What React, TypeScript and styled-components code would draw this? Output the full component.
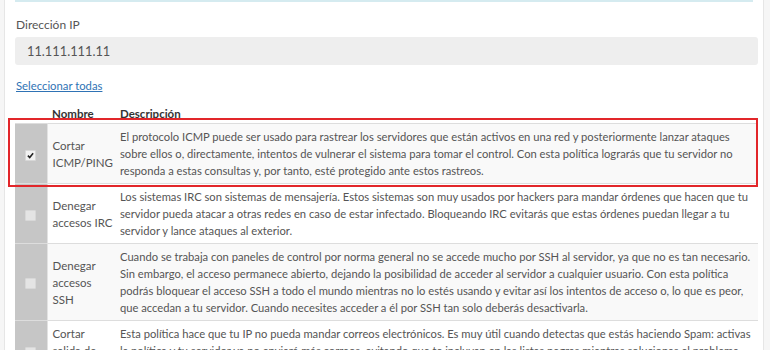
import { createGlobalStyle } from "styled-components";
import styled from "styled-components";

const GlobalStyle = createGlobalStyle`
    html, body {
        margin: 0;
        padding: 0;
        background: #f6f6f6;
    }
    body {
        font-family: Lato, "Open Sans", sans-serif;
        font-size: 11.5px;
        color: #555;
    }
`

const Page = styled.div`
    display: flex;
    height: 350px;
    overflow: hidden;
`

const Gutter = styled.div<{ $w: number }>`
    width: ${p => p.$w}px;
    flex-shrink: 0;
    background: #f6f6f6;
`

const Panel = styled.div`
    flex: 1;
    background: white;
    border-left: 1px solid #e6e6e6;
    border-right: 1px solid #e6e6e6;
    padding: 0 5px 0 10px;
`

const AlertEdge = styled.div`
    height: 0;
    border-bottom: 2px solid #d5ebf0;
    margin-right: 5px;
`

const Label = styled.div`
    margin-top: 14px;
    padding-left: 1px;
    line-height: 17px;
    font-size: 12px;
    color: #555;
`

const ReadonlyInput = styled.div`
    margin-top: 4px;
    height: 28px;
    line-height: 28px;
    background: #eeeeee;
    border-radius: 3px;
    padding: 0 12px;
    font-size: 12.8px;
    color: #555;
`

const SelectAll = styled.a`
    display: inline-block;
    margin-top: 12px;
    padding-left: 1px;
    line-height: 17px;
    font-size: 11.3px;
    color: #2f73b5;
    text-decoration: underline;
    cursor: pointer;
`

const TableWrap = styled.div`
    position: relative;
    margin-top: 8px;
`

const Table = styled.table`
    width: 100%;
    table-layout: fixed;
    border-collapse: collapse;
    line-height: 17px;
`

const Th = styled.th<{ $w?: number; $pl: number }>`
    box-sizing: border-box;
    text-align: left;
    font-weight: bold;
    font-size: 11.5px;
    color: #333;
    padding: 3px 0 1px ${p => p.$pl}px;
    width: ${p => (p.$w ? `${p.$w}px` : "auto")};
`

const Row = styled.tr<{ $striped: boolean }>`
    border-top: 1px solid #dddddd;
    background: ${p => (p.$striped ? "#f9f9f9" : "white")};
`

const CheckCell = styled.td`
    background: #c6c6c6;
    text-align: center;
    vertical-align: middle;
    padding: 0;
`

const NameCell = styled.td`
    padding: 4px 0 4px 5px;
    vertical-align: middle;
    color: #555;
    border-left: 1px solid #e2e2e2;
`

const NameLine = styled.span`
    display: block;
    white-space: nowrap;
`

const DescCell = styled.td`
    padding: 4px 0 4px 6px;
    vertical-align: top;
    color: #555;
    font-size: 11.2px;
`

const DescLine = styled.span`
    display: block;
    white-space: nowrap;
`

const Box = styled.span<{ $checked: boolean }>`
    display: inline-flex;
    align-items: center;
    justify-content: center;
    width: 9px;
    height: 9px;
    border-radius: 1px;
    background: ${p => (p.$checked ? "#f2f2f2" : "#e4e4e4")};
    border: 1px solid #d8d8d8;
    vertical-align: middle;
`

const Highlight = styled.div`
    position: absolute;
    left: -7px;
    right: 0;
    top: 16px;
    height: 65px;
    border: 2px solid #e2262a;
    pointer-events: none;
`

type Policy = { name: string[]; description: string[]; checked?: boolean }

const policies: Policy[] = [
    {
        name: ["Cortar", "ICMP/PING"],
        checked: true,
        description: [
            "El protocolo ICMP puede ser usado para rastrear los servidores que están activos en una red y posteriormente lanzar ataques",
            "sobre ellos o, directamente, intentos de vulnerar el sistema para tomar el control. Con esta política lograrás que tu servidor no",
            "responda a estas consultas y, por tanto, esté protegido ante estos rastreos.",
        ],
    },
    {
        name: ["Denegar", "accesos IRC"],
        description: [
            "Los sistemas IRC son sistemas de mensajería. Estos sistemas son muy usados por hackers para mandar órdenes que hacen que tu",
            "servidor pueda atacar a otras redes en caso de estar infectado. Bloqueando IRC evitarás que estas órdenes puedan llegar a tu",
            "servidor y lance ataques al exterior.",
        ],
    },
    {
        name: ["Denegar", "accesos", "SSH"],
        description: [
            "Cuando se trabaja con paneles de control por norma general no se accede mucho por SSH al servidor, ya que no es tan necesario.",
            "Sin embargo, el acceso permanece abierto, dejando la posibilidad de acceder al servidor a cualquier usuario. Con esta política",
            "podrás bloquear el acceso SSH a todo el mundo mientras no lo estés usando y evitar así los intentos de acceso o, lo que es peor,",
            "que accedan a tu servidor. Cuando necesites acceder a él por SSH tan solo deberás desactivarla.",
        ],
    },
    {
        name: ["Cortar", "salida de", "correo"],
        description: [
            "Esta política hace que tu IP no pueda mandar correos electrónicos. Es muy útil cuando detectas que estás haciendo Spam: activas",
            "la política y tu servidor ya no enviará más correos, evitando que te incluyan en las listas negras mientras solucionas el problema.",
        ],
    },
]

const CheckMark = () => (
    <svg width="7" height="7" viewBox="0 0 8 8">
        <path d="M1 4.2 L3.1 6.3 L7 1.5" fill="none" stroke="#222" strokeWidth="1.8" />
    </svg>
)

const App = () => {
    return (
        <>
            <GlobalStyle />
            <Page>
                <Gutter $w={4} />
                <Panel>
                    <AlertEdge />
                    <Label>Dirección IP</Label>
                    <ReadonlyInput>11.111.111.11</ReadonlyInput>
                    <SelectAll>Seleccionar todas</SelectAll>
                    <TableWrap>
                        <Table>
                            <thead>
                                <tr>
                                    <Th $w={32} $pl={0}></Th>
                                    <Th $w={67} $pl={5}>Nombre</Th>
                                    <Th $pl={6}>Descripción</Th>
                                </tr>
                            </thead>
                            <tbody>
                                {policies.map((policy, index) => (
                                    <Row key={policy.name.join(" ")} $striped={index % 2 === 0}>
                                        <CheckCell>
                                            <Box $checked={!!policy.checked}>
                                                {policy.checked && <CheckMark />}
                                            </Box>
                                        </CheckCell>
                                        <NameCell>
                                            {policy.name.map(line => <NameLine key={line}>{line}</NameLine>)}
                                        </NameCell>
                                        <DescCell>
                                            {policy.description.map(line => <DescLine key={line}>{line}</DescLine>)}
                                        </DescCell>
                                    </Row>
                                ))}
                            </tbody>
                        </Table>
                        <Highlight />
                    </TableWrap>
                </Panel>
                <Gutter $w={6} />
            </Page>
        </>
    )
}

export default App
